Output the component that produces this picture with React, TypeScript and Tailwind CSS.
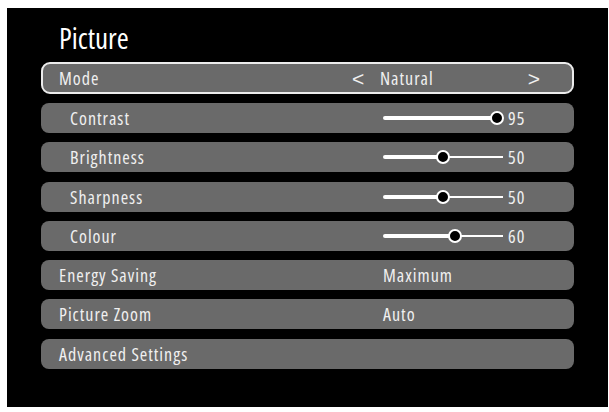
import React from "react";

const font: React.CSSProperties = {
  fontFamily: '"Open Sans", "Noto Sans", sans-serif',
  fontStretch: "75%",
};

const arrowFont: React.CSSProperties = {
  fontFamily: '"Liberation Sans", Arial, sans-serif',
  fontStretch: "100%",
};

function Slider({ value }: { value: number }) {
  const pos = (value / 100) * 120;
  return (
    <div className="flex items-center">
      <div className="relative w-[120px] h-[14px]">
        <div className="absolute left-0 top-[5px] h-[4px] bg-white rounded-full" style={{ width: pos }} />
        <div className="absolute top-[6px] h-[2px] bg-white right-0" style={{ left: pos }} />
        <div
          className="absolute top-[0px] w-[14px] h-[14px] rounded-full bg-black border-[2.5px] border-white"
          style={{ left: pos - 7 }}
        />
      </div>
      <span className="ml-[5px]">{value}</span>
    </div>
  );
}

function Row({
  label,
  sub,
  children,
}: {
  label: string;
  sub?: boolean;
  children?: React.ReactNode;
}) {
  return (
    <div className="h-[30px] rounded-[8px] bg-[#6a6a6a] flex items-center">
      <div className={`w-[342px] shrink-0 ${sub ? "pl-[29px]" : "pl-[18px]"}`}>{label}</div>
      <div className="flex-1 flex items-center">{children}</div>
    </div>
  );
}

export default function App() {
  return (
    <div className="w-[609px] h-[412px] bg-white pt-[8px] pl-[7px]" style={font}>
      <div className="w-[601px] h-[399px] bg-black pt-[15px] px-[34px] text-[#f0f0f0] text-[18px] font-medium leading-none tracking-[1px]">
        <div className="h-[39px] pl-[18px] text-[29px] leading-[29px] tracking-normal text-white">Picture</div>
        <div className="h-[32px] rounded-[9px] border-2 border-[#ececec] bg-[#6a6a6a] flex items-center">
          <div className="w-[309px] shrink-0 pl-[16px]">Mode</div>
          <div className="w-[28px] text-[21px] font-normal tracking-normal" style={arrowFont}>&lt;</div>
          <div className="flex-1">Natural</div>
          <div className="pr-[32px] text-[21px] font-normal tracking-normal" style={arrowFont}>&gt;</div>
        </div>
        <div className="mt-[9px] flex flex-col gap-[9.3px]">
          <Row label="Contrast" sub>
            <Slider value={95} />
          </Row>
          <Row label="Brightness" sub>
            <Slider value={50} />
          </Row>
          <Row label="Sharpness" sub>
            <Slider value={50} />
          </Row>
          <Row label="Colour" sub>
            <Slider value={60} />
          </Row>
          <Row label="Energy Saving">Maximum</Row>
          <Row label="Picture Zoom">Auto</Row>
          <Row label="Advanced Settings" />
        </div>
      </div>
    </div>
  );
}
